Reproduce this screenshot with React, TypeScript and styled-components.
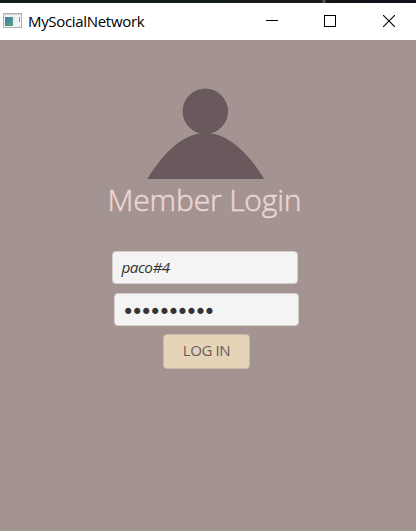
import React from "react";
import styled, { createGlobalStyle } from "styled-components";

const GlobalStyle = createGlobalStyle`
  * { box-sizing: border-box; }
  body { margin: 0; overflow: hidden; }
`;

const Window = styled.div`
  width: 416px;
  height: 531px;
  display: flex;
  flex-direction: column;
  background: #a39391;
  font-family: "Open Sans", "Noto Sans", sans-serif;
`;

const DesktopEdge = styled.div`
  height: 3px;
  flex: none;
  background: linear-gradient(90deg, #151c1c 0, #171b1c 322px, #555052 323px, #555052 325px, #171218 326px, #141018 100%);
`;

const TitleBar = styled.header`
  height: 37px;
  flex: none;
  display: flex;
  align-items: center;
  padding-left: 3px;
  background: #fff;
`;

const AppIcon = styled.svg`
  display: block;
  flex: none;
  margin-bottom: 2px;
`;

const AppTitle = styled.span`
  flex: 1;
  margin: 0 0 2px 6px;
  font-size: 15px;
  line-height: 20px;
  letter-spacing: -0.32px;
  color: #000;
  white-space: nowrap;
`;

const Controls = styled.div`
  display: flex;
  height: 100%;
  margin-right: -2px;
`;

const ControlButton = styled.button`
  width: 58.5px;
  height: 35px;
  padding: 0;
  border: 0;
  background: none;
  display: flex;
  align-items: center;
  justify-content: center;

  svg { display: block; }
`;

const LoginForm = styled.form`
  display: flex;
  flex-direction: column;
  padding-top: 48px;
`;

const Avatar = styled.svg`
  display: block;
  margin-left: 147px;
`;

const Heading = styled.h1`
  margin: 0 0 0 107.5px;
  height: 72px;
  font-size: 30px;
  line-height: 41px;
  font-weight: 300;
  letter-spacing: -0.15px;
  color: #edd6d3;
  -webkit-text-stroke: 0.5px #edd6d3;
  white-space: nowrap;
`;

const Field = styled.input<{ $secret?: boolean }>`
  width: ${(p) => (p.$secret ? 185 : 186)}px;
  height: 33px;
  margin: 0 0 ${(p) => (p.$secret ? 8 : 9)}px ${(p) => (p.$secret ? 114 : 112.4)}px;
  padding: ${(p) => (p.$secret ? "5px 7px 0" : "0 8px 1px")};
  border: 1px solid #d5cdcc;
  border-radius: 4px;
  outline: none;
  background: #f4f4f4;
  color: #333;
  font-family: ${(p) => (p.$secret ? '"DejaVu Sans"' : '"Open Sans", "Noto Sans"')}, sans-serif;
  font-size: ${(p) => (p.$secret ? 21 : 15.3)}px;
  font-style: ${(p) => (p.$secret ? "normal" : "italic")};
  letter-spacing: ${(p) => (p.$secret ? -3.35 : -0.5)}px;
`;

const LoginButton = styled.button`
  width: 87px;
  height: 35px;
  margin-left: 163px;
  padding: 0 0 3px;
  border: 1px solid #c8b8a6;
  border-radius: 4px;
  background: #e5d4b8;
  color: #69595d;
  font-family: "Open Sans", "Noto Sans", sans-serif;
  font-size: 15px;
  letter-spacing: -0.4px;
`;

export default function App() {
  return (
    <>
      <GlobalStyle />
      <Window>
        <DesktopEdge />
        <TitleBar>
          <AppIcon width="19" height="16" viewBox="0 0 19 16">
            <defs>
              <linearGradient id="pane" x1="0" y1="0" x2="1" y2="1">
                <stop offset="0" stopColor="#427eac" />
                <stop offset="1" stopColor="#55a477" />
              </linearGradient>
            </defs>
            <rect x="0.5" y="0.5" width="18" height="14" fill="#f2f3f4" stroke="#b0b2b5" />
            <path d="M1 1.5h17" stroke="#d5d7d9" />
            <rect x="2" y="4" width="8" height="9" fill="url(#pane)" />
            <path d="M11.5 4v9" stroke="#dce2e3" />
            <path d="M16.5 4v5" stroke="#60aa92" />
          </AppIcon>
          <AppTitle>MySocialNetwork</AppTitle>
          <Controls>
            <ControlButton type="button" aria-label="Minimize">
              <svg width="12" height="12" viewBox="0 0 12 12"><path d="M0 5.5h12" stroke="#000" /></svg>
            </ControlButton>
            <ControlButton type="button" aria-label="Maximize">
              <svg width="12" height="12" viewBox="0 0 12 12"><rect x="0.5" y="0.5" width="11" height="11" fill="none" stroke="#000" /></svg>
            </ControlButton>
            <ControlButton type="button" aria-label="Close">
              <svg width="12" height="12" viewBox="0 0 12 12"><path d="M0 0l12 12M12 0L0 12" stroke="#000" strokeWidth="1.1" /></svg>
            </ControlButton>
          </Controls>
        </TitleBar>
        <LoginForm onSubmit={(e) => e.preventDefault()}>
          <Avatar width="118" height="91" viewBox="0 0 118 91">
            <g fill="#69595d" stroke="#615457" strokeWidth="0.8">
              <path d="M1 90.5C38 30.500 79 30.500 116.500 90.500Z" />
              <circle cx="58.300" cy="23.300" r="22.300" />
            </g>
          </Avatar>
          <Heading>Member Login</Heading>
          <Field aria-label="User name" defaultValue="paco#4" spellCheck={false} />
          <Field $secret type="password" aria-label="Password" defaultValue="0123456789" />
          <LoginButton type="submit">LOG IN</LoginButton>
        </LoginForm>
      </Window>
    </>
  );
}
